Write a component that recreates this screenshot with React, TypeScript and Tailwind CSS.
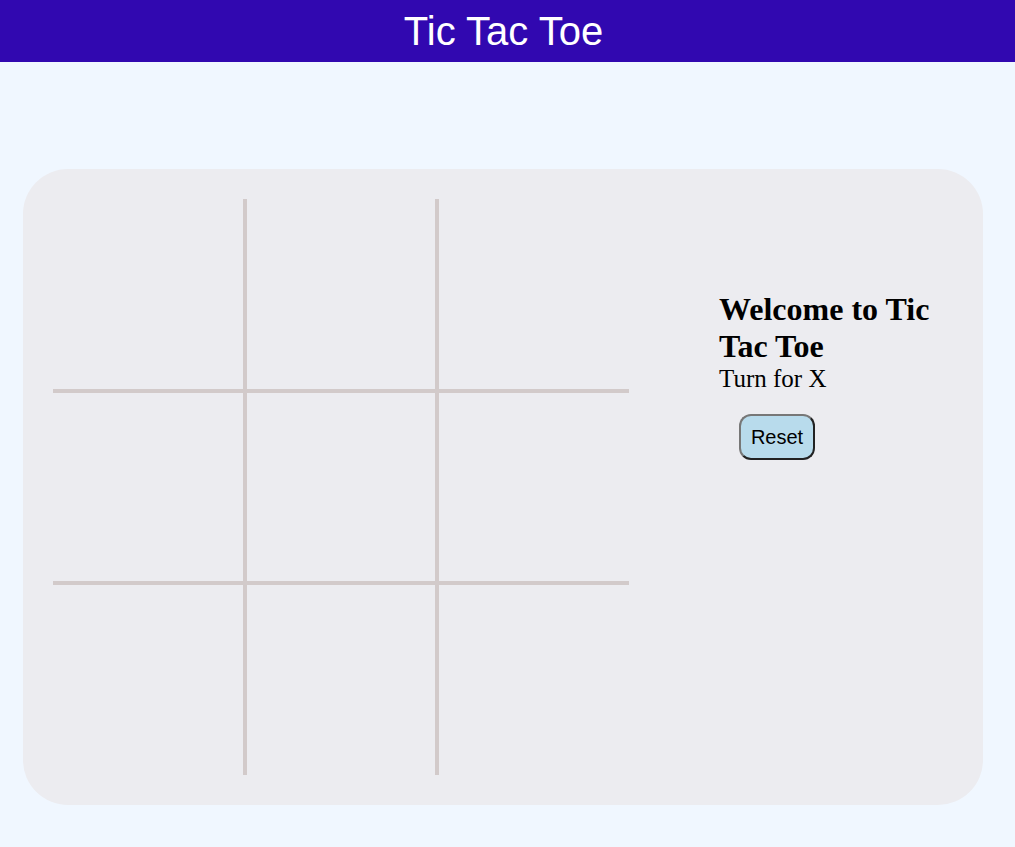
import { useState } from 'react'

type Mark = 'X' | 'O' | null

export default function App() {
  const [cells, setCells] = useState<Mark[]>(Array(9).fill(null))
  const [turn, setTurn] = useState<'X' | 'O'>('X')

  const play = (i: number) => {
    if (cells[i]) return
    const next = [...cells]
    next[i] = turn
    setCells(next)
    setTurn(turn === 'X' ? 'O' : 'X')
  }

  const reset = () => {
    setCells(Array(9).fill(null))
    setTurn('X')
  }

  return (
    <div className="min-h-[847px] bg-[#f0f7ff]">
      <header className="flex h-[62px] items-center justify-center bg-[#3108b0] pr-[8px]">
        <h1 className="font-['Liberation_Sans',Arial,sans-serif] text-[40px] leading-none text-white">Tic Tac Toe</h1>
      </header>

      <div className="ml-[23px] mt-[107px] flex w-[960px] rounded-[45px] bg-[#ececf0] p-[30px]">
        <div className="grid h-[576px] w-[576px] shrink-0 grid-cols-3 grid-rows-3">
          {cells.map((c, i) => {
            const col = i % 3
            const row = Math.floor(i / 3)
            return (
              <button
                key={i}
                onClick={() => play(i)}
                className={
                  'flex items-center justify-center border-[#d2caca] font-["Liberation_Sans",Arial,sans-serif] text-[96px] text-[#333] ' +
                  (col < 2 ? 'border-r-2 ' : '') +
                  (col > 0 ? 'border-l-2 ' : '') +
                  (row < 2 ? 'border-b-2 ' : '') +
                  (row > 0 ? 'border-t-2' : '')
                }
              >
                {c}
              </button>
            )
          })}
        </div>

        <div className="pl-[90px] pt-[92px]">
          <div className="w-[235px] font-['Liberation_Serif','Times_New_Roman',serif] text-black">
            <h2 className="text-[32px] font-bold leading-[37px]">Welcome to Tic Tac Toe</h2>
            <p className="text-[25px] leading-[28px]">Turn for {turn}</p>
          </div>
          <button
            onClick={reset}
            className="ml-[20px] mt-[21px] h-[46px] w-[76px] rounded-[12px] border-2 border-t-[#777] border-l-[#777] border-r-[#222] border-b-[#222] bg-[#b8dbec] font-['Liberation_Sans',Arial,sans-serif] text-[20px] text-black"
          >
            Reset
          </button>
        </div>
      </div>
    </div>
  )
}
